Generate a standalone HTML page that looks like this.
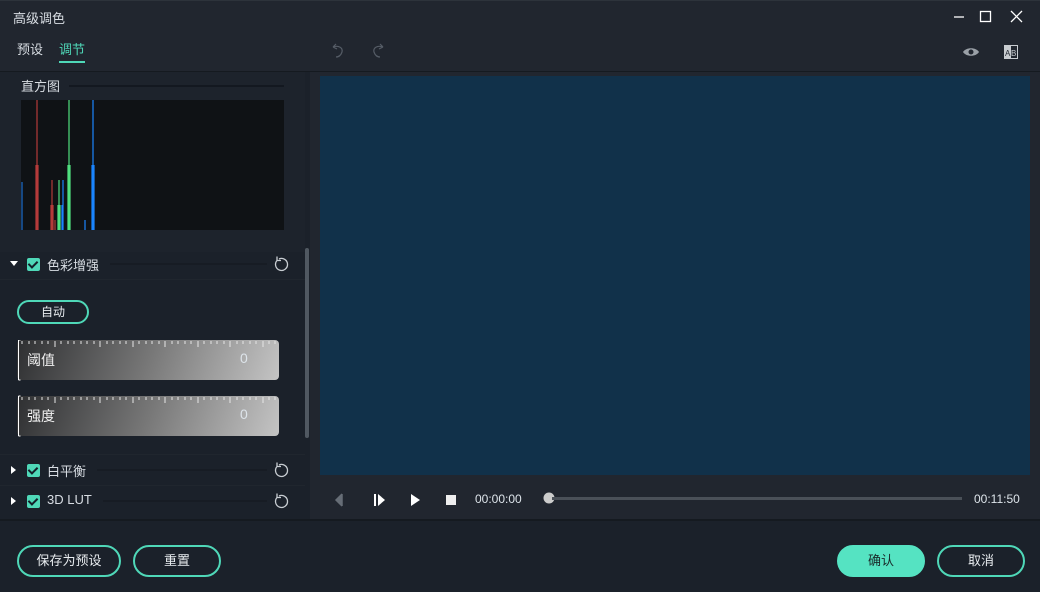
<!DOCTYPE html><html><head><meta charset="utf-8"><style>
*{margin:0;padding:0;box-sizing:border-box}
body{width:1040px;height:592px;background:#1b212a;font-family:"Liberation Sans","Noto Sans CJK SC",sans-serif;color:#d8dde3;position:relative;overflow:hidden;font-size:13px}
.a{position:absolute}
.btn{position:absolute;border:2px solid #4fd8b8;border-radius:16px;text-align:center;color:#e8ecef;font-size:13px}
.sl{position:absolute;left:17px;width:262px;height:40px;border-radius:4px;background:linear-gradient(110deg,#2e2f31,#777 50%,#c4c4c4)}
.cb{position:absolute;width:13px;height:13px;background:#4fd8b8;border-radius:2px}
.cb:after{content:"";position:absolute;left:3px;top:1px;width:4px;height:7px;border:solid #14202a;border-width:0 2px 2px 0;transform:rotate(45deg)}
</style></head><body>
<div class="a" style="left:0;top:72px;width:305px;height:180px;background:#1d232c"></div>
<div class="a" style="left:0;top:0;width:1040px;height:72px;background:#21262f;border-bottom:1px solid #151a20;border-top:1px solid #2d333b"></div>
<div class="a" style="left:13px;top:8px;font-size:13px">高级调色</div>
<div class="a" style="left:17px;top:39px">预设</div>
<div class="a" style="left:59px;top:39px;color:#4fd8b8">调节</div>
<div class="a" style="left:59px;top:61px;width:26px;height:2px;background:#4fd8b8"></div>
<svg class="a" style="left:0;top:0" width="1040" height="72">
<g stroke="#fff" stroke-width="1.3" fill="none"><path d="M954 17h10"/><rect x="980.5" y="11.5" width="10" height="10"/><path d="M1011 11l11 11M1022 11l-11 11"/></g>
<g stroke="#555c66" stroke-width="1.2" fill="none"><path d="M333 47l3 -3M333 47l4 2M333 47c6-2 10 1 9 5c-1 3-3 5-6 5"/><path d="M383 47l-3 -3M383 47l-4 2M383 47c-6-2-10 1-9 5c1 3 3 5 6 5"/></g>
<path d="M963 52c3-5 13-5 16 0c-3 5-13 5-16 0z" fill="#9aa0a7"/><circle cx="971" cy="52" r="2.5" fill="#21262f"/>
<rect x="1004" y="45" width="14" height="14" fill="#c8ccd0"/><rect x="1011" y="46" width="6" height="12" fill="#21262f"/>
<text x="1005" y="56" font-size="8" fill="#21262f" font-family="Liberation Sans">A</text><text x="1011" y="56" font-size="8" fill="#c8ccd0" font-family="Liberation Sans">B</text>
</svg>
<div class="a" style="left:310px;top:72px;width:730px;height:448px;background:#21262f"></div>
<div class="a" style="left:320px;top:76px;width:710px;height:399px;background:#11314a"></div>
<div class="a" style="left:0;top:519px;width:1040px;height:2px;background:#151a20"></div>
<div class="a" style="left:21px;top:76px">直方图</div>
<div class="a" style="left:69px;top:85px;width:215px;height:2px;background:#131820"></div>
<svg class="a" style="left:21px;top:100px" width="263" height="130"><rect width="263" height="130" fill="#0f1215"/>
<g stroke-width="1.2"><path d="M1 82v48" stroke="#1a6ccc"/><path d="M16 0v130M15 65v65M17 65v65" stroke="#b53a3a"/><path d="M31 80v50M30 105v25M32 105v25M34 120v10" stroke="#b53a3a"/><path d="M38 80v50M37 105v25M39 105v25" stroke="#4fe07f"/><path d="M48 0v130M47 65v65M49 65v65" stroke="#4fe07f"/><path d="M42 80v50M41 105v25" stroke="#1a85ff"/><path d="M72 0v130M71 65v65M73 65v65" stroke="#1a85ff"/><path d="M64 120v10" stroke="#1a85ff"/></g></svg>
<div class="a" style="left:305px;top:248px;width:4px;height:190px;background:#505861;border-radius:2px"></div>
<div class="a" style="left:0;top:279px;width:305px;height:1px;background:#20262e"></div>
<div class="a" style="left:0;top:454px;width:305px;height:1px;background:#20262e"></div>
<div class="a" style="left:0;top:485px;width:305px;height:1px;background:#20262e"></div>
<svg class="a" style="left:0;top:250px" width="305" height="270">
<g fill="#fff"><path d="M10 11h8l-4 5z"/><path d="M11 216v8l5-4z"/><path d="M11 247v8l5-4z"/></g>
<g stroke="#13181e" stroke-width="1"><path d="M110 14h157M97 220h170M103 251h164"/></g>
<g stroke="#c8cdd2" stroke-width="1.3" fill="none"><path d="M279 9a6 6 0 1 1 -2 1.5M277 10.5l0 -4M277 10.5l4 0"/><path d="M279 215a6 6 0 1 1 -2 1.5M277 216.5l0 -4M277 216.5l4 0"/><path d="M279 246a6 6 0 1 1 -2 1.5M277 247.5l0 -4M277 247.5l4 0"/></g>
</svg>
<div class="cb" style="left:27px;top:258px"></div><div class="a" style="left:47px;top:255px">色彩增强</div>
<div class="btn" style="left:17px;top:300px;width:72px;height:24px;line-height:20px;font-size:12px">自动</div>
<div class="sl" style="top:340px"></div><div class="sl" style="top:396px"></div>
<svg class="a" style="left:17px;top:340px" width="262" height="100"><g stroke="#fff" stroke-width="1"><path d="M1.5 0v40M1.5 0h2M1.5 40h2M1.5 56v40M1.5 56h2M1.5 96h2"/></g>
<g stroke="#e6e6e6" stroke-width="1"><path d="M5 1v3M12 1v3M18 1v3M25 1v3M31 1v3M38 1v6M44 1v3M51 1v3M57 1v3M64 1v3M70 1v3M77 1v3M83 1v6M90 1v3M96 1v3M103 1v3M109 1v3M116 1v6M122 1v3M129 1v3M135 1v3M142 1v3M148 1v6M155 1v3M161 1v3M168 1v3M174 1v3M181 1v6M187 1v3M194 1v3M200 1v3M207 1v3M213 1v6M220 1v3M226 1v3M233 1v3M239 1v3M246 1v6M252 1v3M258 1v3"/><path d="M5 57v3M12 57v3M18 57v3M25 57v3M31 57v3M38 57v6M44 57v3M51 57v3M57 57v3M64 57v3M70 57v3M77 57v3M83 57v6M90 57v3M96 57v3M103 57v3M109 57v3M116 57v6M122 57v3M129 57v3M135 57v3M142 57v3M148 57v6M155 57v3M161 57v3M168 57v3M174 57v3M181 57v6M187 57v3M194 57v3M200 57v3M207 57v3M213 57v6M220 57v3M226 57v3M233 57v3M239 57v3M246 57v6M252 57v3M258 57v3"/></g></svg>
<div class="a" style="left:27px;top:350px;font-size:14px;color:#f0f0f0">阈值</div><div class="a" style="left:240px;top:350px;font-size:14px;color:#dde4ea">0</div>
<div class="a" style="left:27px;top:406px;font-size:14px;color:#f0f0f0">强度</div><div class="a" style="left:240px;top:406px;font-size:14px;color:#dde4ea">0</div>
<div class="cb" style="left:27px;top:464px"></div><div class="a" style="left:47px;top:461px">白平衡</div>
<div class="cb" style="left:27px;top:495px"></div><div class="a" style="left:47px;top:492px">3D LUT</div>
<svg class="a" style="left:330px;top:488px" width="230" height="24"><path d="M12 6v12M6 12l5-5v10z" stroke="#666d76" fill="#666d76" stroke-width="1.5"/><path d="M45 6v12" stroke="#fff" stroke-width="2"/><path d="M48 6l7 6-7 6z" fill="#fff"/><path d="M81 6l9 6-9 6z" fill="#fff"/><rect x="116" y="7" width="10" height="10" fill="#eee"/><circle cx="219" cy="10" r="5.5" fill="#ccc"/></svg>
<div class="a" style="left:475px;top:492px;font-size:12px;color:#dde4ea">00:00:00</div>
<div class="a" style="left:552px;top:497px;width:410px;height:3px;background:#4a5058"></div>
<div class="a" style="left:974px;top:492px;font-size:12px;color:#dde4ea">00:11:50</div>
<div class="btn" style="left:17px;top:545px;width:104px;height:32px;line-height:28px">保存为预设</div>
<div class="btn" style="left:133px;top:545px;width:88px;height:32px;line-height:28px">重置</div>
<div class="btn" style="left:837px;top:545px;width:88px;height:32px;line-height:28px;background:#55e3c2;border-color:#55e3c2;color:#1a2a2a">确认</div>
<div class="btn" style="left:937px;top:545px;width:88px;height:32px;line-height:28px">取消</div>
</body></html>
